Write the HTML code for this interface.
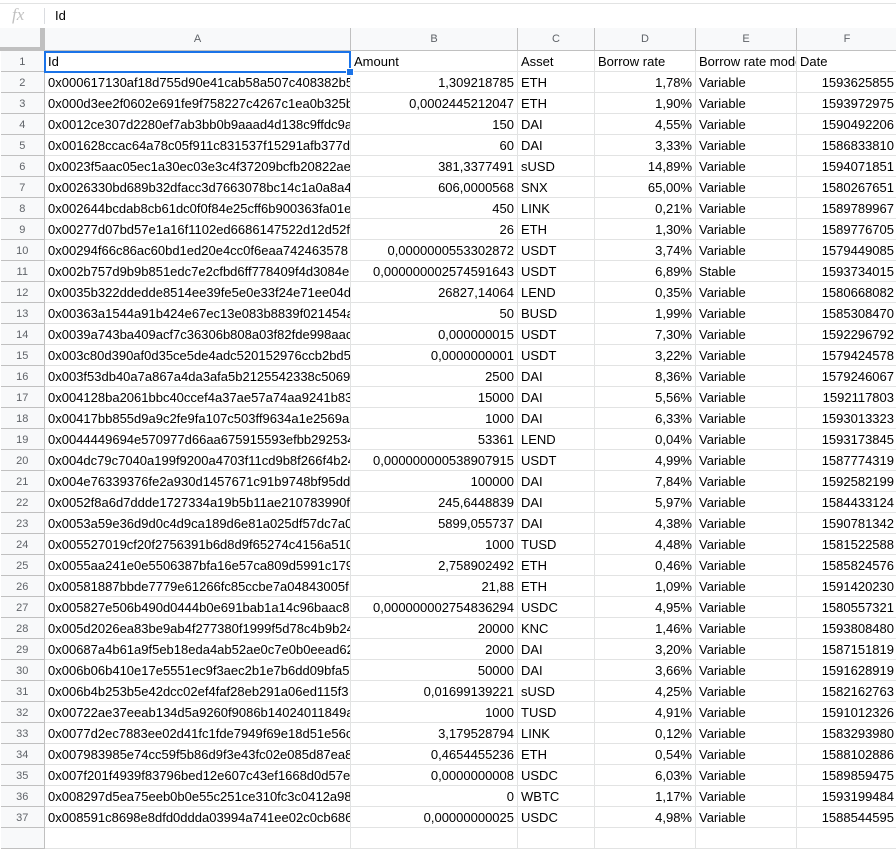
<!DOCTYPE html>
<html><head><meta charset="utf-8"><style>
body{margin:0;width:896px;height:836px;overflow:hidden;background:#fff;font-family:"Liberation Sans",Arial,sans-serif;position:relative}
.fb{position:absolute;left:0;top:3px;width:896px;height:24px;border-top:1px solid #e2e3e3;border-bottom:1px solid #e2e3e3;}
.fx{position:absolute;left:12px;top:1px;font-family:"Liberation Serif",serif;font-style:italic;color:#c0c0c0;font-size:17px}
.sep{position:absolute;left:44px;top:4px;width:1px;height:16px;background:#dadce0}
.fv{position:absolute;left:55px;top:4px;font-size:13px;color:#000}
table{position:absolute;left:0;top:28px;border-collapse:collapse;table-layout:fixed;width:897px}
td{height:18px;padding:2px 3px 0 3px;border:1px solid #e2e3e3;font-size:13px;white-space:nowrap;overflow:hidden;color:#000;line-height:18px}
tr.h td{height:22px;padding-top:0;line-height:20px;background:#f8f9fa;color:#5f6368;text-align:center;font-size:11px;border-color:#c0c0c0;border-top:none}
td.rh{background:#f8f9fa;color:#5f6368;text-align:center;font-size:11px;border-color:#c0c0c0;border-left:none;padding-left:0;padding-right:0}
td.r{text-align:right}
td.a{text-overflow:clip}
.corner{position:absolute;left:0;top:28px;width:40px;height:19px;background:#f8f9fa;border-right:4px solid #c0c0c0;border-bottom:4px solid #c0c0c0}
.sel{position:absolute;left:44px;top:51px;width:303px;height:18px;border:2px solid #1a73e8;pointer-events:none}
.hd{position:absolute;left:346px;top:68px;width:6px;height:6px;background:#1a73e8;border:1px solid #fff}
</style></head><body>
<div class="fb"><span class="fx">fx</span><div class="sep"></div><span class="fv">Id</span></div>
<table>
<colgroup><col style="width:44px"><col style="width:306px"><col style="width:167px"><col style="width:77px"><col style="width:101px"><col style="width:101px"><col style="width:101px"></colgroup>
<tr class="h"><td></td><td>A</td><td>B</td><td>C</td><td>D</td><td>E</td><td>F</td></tr>
<tr><td class="rh">1</td><td>Id</td><td>Amount</td><td>Asset</td><td>Borrow rate</td><td>Borrow rate mode</td><td>Date</td></tr>
<tr><td class="rh">2</td><td class="a">0x000617130af18d755d90e41cab58a507c408382b5</td><td class="r">1,309218785</td><td>ETH</td><td class="r">1,78%</td><td>Variable</td><td class="r">1593625855</td></tr>
<tr><td class="rh">3</td><td class="a">0x000d3ee2f0602e691fe9f758227c4267c1ea0b325b</td><td class="r">0,0002445212047</td><td>ETH</td><td class="r">1,90%</td><td>Variable</td><td class="r">1593972975</td></tr>
<tr><td class="rh">4</td><td class="a">0x0012ce307d2280ef7ab3bb0b9aaad4d138c9ffdc9a</td><td class="r">150</td><td>DAI</td><td class="r">4,55%</td><td>Variable</td><td class="r">1590492206</td></tr>
<tr><td class="rh">5</td><td class="a">0x001628ccac64a78c05f911c831537f15291afb377d</td><td class="r">60</td><td>DAI</td><td class="r">3,33%</td><td>Variable</td><td class="r">1586833810</td></tr>
<tr><td class="rh">6</td><td class="a">0x0023f5aac05ec1a30ec03e3c4f37209bcfb20822ae</td><td class="r">381,3377491</td><td>sUSD</td><td class="r">14,89%</td><td>Variable</td><td class="r">1594071851</td></tr>
<tr><td class="rh">7</td><td class="a">0x0026330bd689b32dfacc3d7663078bc14c1a0a8a4</td><td class="r">606,0000568</td><td>SNX</td><td class="r">65,00%</td><td>Variable</td><td class="r">1580267651</td></tr>
<tr><td class="rh">8</td><td class="a">0x002644bcdab8cb61dc0f0f84e25cff6b900363fa01e</td><td class="r">450</td><td>LINK</td><td class="r">0,21%</td><td>Variable</td><td class="r">1589789967</td></tr>
<tr><td class="rh">9</td><td class="a">0x00277d07bd57e1a16f1102ed6686147522d12d52f</td><td class="r">26</td><td>ETH</td><td class="r">1,30%</td><td>Variable</td><td class="r">1589776705</td></tr>
<tr><td class="rh">10</td><td class="a">0x00294f66c86ac60bd1ed20e4cc0f6eaa742463578</td><td class="r">0,0000000553302872</td><td>USDT</td><td class="r">3,74%</td><td>Variable</td><td class="r">1579449085</td></tr>
<tr><td class="rh">11</td><td class="a">0x002b757d9b9b851edc7e2cfbd6ff778409f4d3084e</td><td class="r">0,000000002574591643</td><td>USDT</td><td class="r">6,89%</td><td>Stable</td><td class="r">1593734015</td></tr>
<tr><td class="rh">12</td><td class="a">0x0035b322ddedde8514ee39fe5e0e33f24e71ee04d</td><td class="r">26827,14064</td><td>LEND</td><td class="r">0,35%</td><td>Variable</td><td class="r">1580668082</td></tr>
<tr><td class="rh">13</td><td class="a">0x00363a1544a91b424e67ec13e083b8839f021454a</td><td class="r">50</td><td>BUSD</td><td class="r">1,99%</td><td>Variable</td><td class="r">1585308470</td></tr>
<tr><td class="rh">14</td><td class="a">0x0039a743ba409acf7c36306b808a03f82fde998aac</td><td class="r">0,000000015</td><td>USDT</td><td class="r">7,30%</td><td>Variable</td><td class="r">1592296792</td></tr>
<tr><td class="rh">15</td><td class="a">0x003c80d390af0d35ce5de4adc520152976ccb2bd5</td><td class="r">0,0000000001</td><td>USDT</td><td class="r">3,22%</td><td>Variable</td><td class="r">1579424578</td></tr>
<tr><td class="rh">16</td><td class="a">0x003f53db40a7a867a4da3afa5b2125542338c5069</td><td class="r">2500</td><td>DAI</td><td class="r">8,36%</td><td>Variable</td><td class="r">1579246067</td></tr>
<tr><td class="rh">17</td><td class="a">0x004128ba2061bbc40ccef4a37ae57a74aa9241b83</td><td class="r">15000</td><td>DAI</td><td class="r">5,56%</td><td>Variable</td><td class="r">1592117803</td></tr>
<tr><td class="rh">18</td><td class="a">0x00417bb855d9a9c2fe9fa107c503ff9634a1e2569a</td><td class="r">1000</td><td>DAI</td><td class="r">6,33%</td><td>Variable</td><td class="r">1593013323</td></tr>
<tr><td class="rh">19</td><td class="a">0x0044449694e570977d66aa675915593efbb292534</td><td class="r">53361</td><td>LEND</td><td class="r">0,04%</td><td>Variable</td><td class="r">1593173845</td></tr>
<tr><td class="rh">20</td><td class="a">0x004dc79c7040a199f9200a4703f11cd9b8f266f4b24</td><td class="r">0,000000000538907915</td><td>USDT</td><td class="r">4,99%</td><td>Variable</td><td class="r">1587774319</td></tr>
<tr><td class="rh">21</td><td class="a">0x004e76339376fe2a930d1457671c91b9748bf95dd</td><td class="r">100000</td><td>DAI</td><td class="r">7,84%</td><td>Variable</td><td class="r">1592582199</td></tr>
<tr><td class="rh">22</td><td class="a">0x0052f8a6d7ddde1727334a19b5b11ae210783990f</td><td class="r">245,6448839</td><td>DAI</td><td class="r">5,97%</td><td>Variable</td><td class="r">1584433124</td></tr>
<tr><td class="rh">23</td><td class="a">0x0053a59e36d9d0c4d9ca189d6e81a025df57dc7a0</td><td class="r">5899,055737</td><td>DAI</td><td class="r">4,38%</td><td>Variable</td><td class="r">1590781342</td></tr>
<tr><td class="rh">24</td><td class="a">0x005527019cf20f2756391b6d8d9f65274c4156a510</td><td class="r">1000</td><td>TUSD</td><td class="r">4,48%</td><td>Variable</td><td class="r">1581522588</td></tr>
<tr><td class="rh">25</td><td class="a">0x0055aa241e0e5506387bfa16e57ca809d5991c179</td><td class="r">2,758902492</td><td>ETH</td><td class="r">0,46%</td><td>Variable</td><td class="r">1585824576</td></tr>
<tr><td class="rh">26</td><td class="a">0x00581887bbde7779e61266fc85ccbe7a04843005f</td><td class="r">21,88</td><td>ETH</td><td class="r">1,09%</td><td>Variable</td><td class="r">1591420230</td></tr>
<tr><td class="rh">27</td><td class="a">0x005827e506b490d0444b0e691bab1a14c96baac8</td><td class="r">0,000000002754836294</td><td>USDC</td><td class="r">4,95%</td><td>Variable</td><td class="r">1580557321</td></tr>
<tr><td class="rh">28</td><td class="a">0x005d2026ea83be9ab4f277380f1999f5d78c4b9b24</td><td class="r">20000</td><td>KNC</td><td class="r">1,46%</td><td>Variable</td><td class="r">1593808480</td></tr>
<tr><td class="rh">29</td><td class="a">0x00687a4b61a9f5eb18eda4ab52ae0c7e0b0eead62</td><td class="r">2000</td><td>DAI</td><td class="r">3,20%</td><td>Variable</td><td class="r">1587151819</td></tr>
<tr><td class="rh">30</td><td class="a">0x006b06b410e17e5551ec9f3aec2b1e7b6dd09bfa5</td><td class="r">50000</td><td>DAI</td><td class="r">3,66%</td><td>Variable</td><td class="r">1591628919</td></tr>
<tr><td class="rh">31</td><td class="a">0x006b4b253b5e42dcc02ef4faf28eb291a06ed115f3</td><td class="r">0,01699139221</td><td>sUSD</td><td class="r">4,25%</td><td>Variable</td><td class="r">1582162763</td></tr>
<tr><td class="rh">32</td><td class="a">0x00722ae37eeab134d5a9260f9086b14024011849a</td><td class="r">1000</td><td>TUSD</td><td class="r">4,91%</td><td>Variable</td><td class="r">1591012326</td></tr>
<tr><td class="rh">33</td><td class="a">0x0077d2ec7883ee02d41fc1fde7949f69e18d51e56c</td><td class="r">3,179528794</td><td>LINK</td><td class="r">0,12%</td><td>Variable</td><td class="r">1583293980</td></tr>
<tr><td class="rh">34</td><td class="a">0x007983985e74cc59f5b86d9f3e43fc02e085d87ea8</td><td class="r">0,4654455236</td><td>ETH</td><td class="r">0,54%</td><td>Variable</td><td class="r">1588102886</td></tr>
<tr><td class="rh">35</td><td class="a">0x007f201f4939f83796bed12e607c43ef1668d0d57e</td><td class="r">0,0000000008</td><td>USDC</td><td class="r">6,03%</td><td>Variable</td><td class="r">1589859475</td></tr>
<tr><td class="rh">36</td><td class="a">0x008297d5ea75eeb0b0e55c251ce310fc3c0412a98</td><td class="r">0</td><td>WBTC</td><td class="r">1,17%</td><td>Variable</td><td class="r">1593199484</td></tr>
<tr><td class="rh">37</td><td class="a">0x008591c8698e8dfd0ddda03994a741ee02c0cb686</td><td class="r">0,00000000025</td><td>USDC</td><td class="r">4,98%</td><td>Variable</td><td class="r">1588544595</td></tr>
<tr><td class="rh"></td><td></td><td></td><td></td><td></td><td></td><td></td></tr>
</table>
<div class="corner"></div>
<div class="sel"></div><div class="hd"></div>
</body></html>
